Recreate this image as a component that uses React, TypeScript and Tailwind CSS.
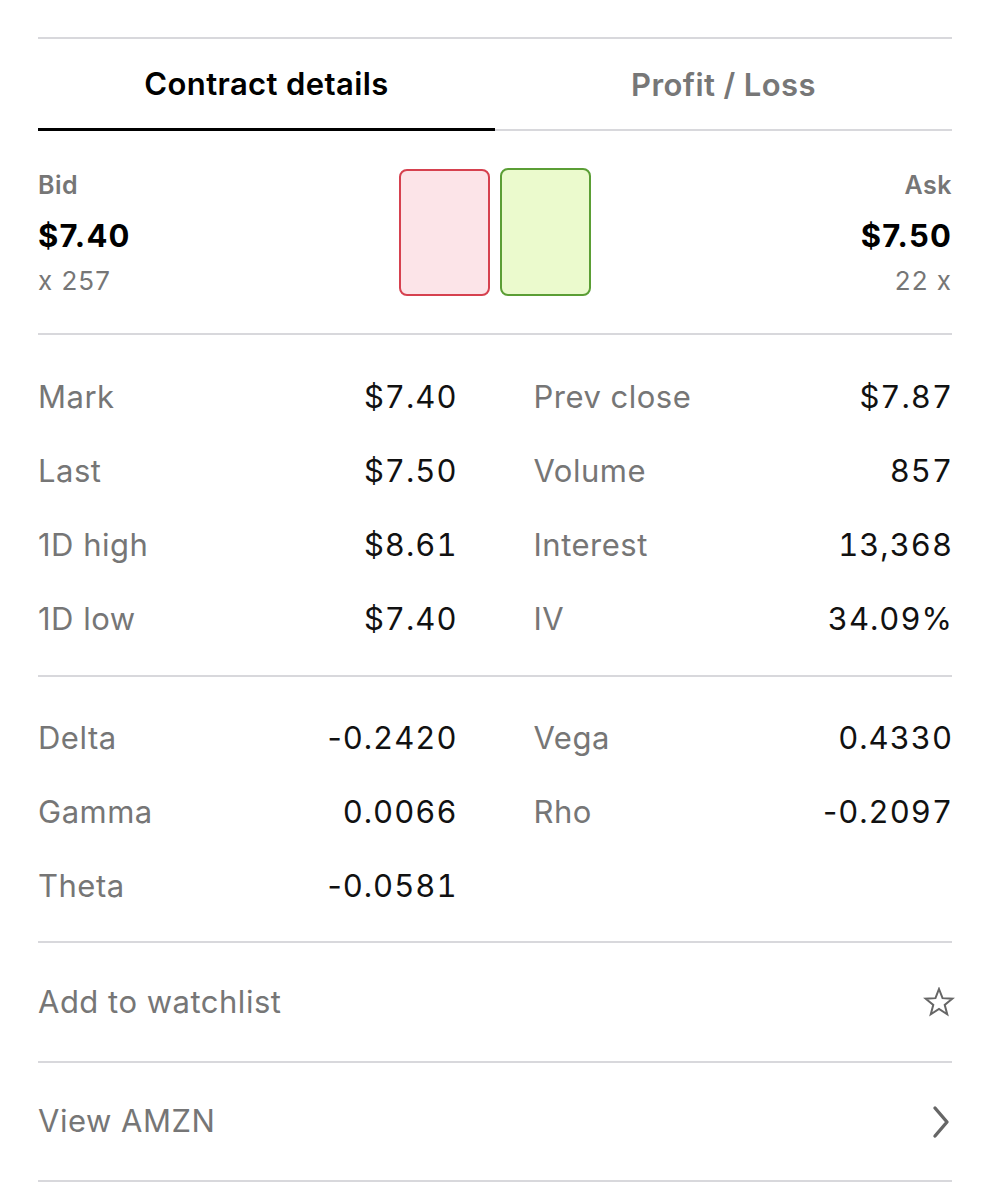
const stats = [
  ["Mark", "$7.40", "Prev close", "$7.87"],
  ["Last", "$7.50", "Volume", "857"],
  ["1D high", "$8.61", "Interest", "13,368"],
  ["1D low", "$7.40", "IV", "34.09%"],
];

const greeks = [
  ["Delta", "-0.2420", "Vega", "0.4330"],
  ["Gamma", "0.0066", "Rho", "-0.2097"],
  ["Theta", "-0.0581", "", ""],
];

const Value = ({ value }: { value: string }) =>
  value.startsWith("-") ? (
    <>
      <span className="normal-nums">-</span>
      {value.slice(1)}
    </>
  ) : (
    <>{value}</>
  );

const Row = ({ label, value }: { label: string; value: string }) => (
  <div className="flex h-[74px] items-center justify-between">
    <span className="text-[#767676]">{label}</span>
    <span className="-mr-[1px] tracking-[1px] text-[#111111] tabular-nums">
      <Value value={value} />
    </span>
  </div>
);

const StatGrid = ({ rows }: { rows: string[][] }) => (
  <div className="grid grid-cols-2 gap-x-[77px]">
    {rows.map(([l1, v1, l2, v2]) => (
      <div key={l1} className="contents">
        <Row label={l1} value={v1} />
        {l2 ? <Row label={l2} value={v2} /> : <div />}
      </div>
    ))}
  </div>
);

const StarIcon = () => (
  <svg width="32" height="30" viewBox="0 0 32 30" className="-mr-[3px]">
    <polygon
      points="16,2 19.53,11.15 29.31,11.67 21.71,17.85 24.23,27.33 16,22 7.77,27.33 10.29,17.85 2.69,11.67 12.47,11.15"
      fill="none"
      stroke="#666666"
      strokeWidth="2"
      strokeLinejoin="miter"
    />
  </svg>
);

const Chevron = () => (
  <svg width="18" height="34" viewBox="0 0 18 34" className="mr-[2px]">
    <polyline
      points="3,3 15,17 3,31"
      fill="none"
      stroke="#666666"
      strokeWidth="3.4"
      strokeLinecap="round"
      strokeLinejoin="round"
    />
  </svg>
);

export default function App() {
  return (
    <div
      className="min-h-[1200px] bg-white px-[38px] pt-[37px] text-[31px] tracking-[0.5px]"
      style={{ fontFamily: "Inter, 'Noto Sans', sans-serif" }}
    >
      <div className="border-t-2 border-[#d8d8dc]">
        <div className="flex h-[92px]">
          <div className="flex flex-1 items-center justify-center border-b-[3px] border-black pt-[2px] text-[31px] font-semibold tracking-[0.4px] text-black">
            Contract details
          </div>
          <div className="flex flex-1 items-center justify-center border-b-2 border-[#d8d8dc] pt-[2px] text-[31px] font-semibold tracking-[0.4px] text-[#777777]">
            Profit / Loss
          </div>
        </div>

        <div className="flex h-[204px] items-start justify-between border-b-2 border-[#d8d8dc] pt-[38px]">
          <div className="flex w-[200px] flex-col">
            <span className="text-[25px] leading-[32px] font-semibold text-[#767676]">Bid</span>
            <span className="mt-[15px] text-[31px] leading-[40px] font-bold tracking-[1.2px] text-black">$7.40</span>
            <span className="mt-[9px] text-[26px] leading-[32px] tracking-[1px] text-[#767676]">x 257</span>
          </div>
          <div className="flex gap-[10px]">
            <div className="h-[127px] w-[91px] rounded-[8px] border-2 border-[#d6414f] bg-[#fce4e8]" />
            <div className="-mt-[1px] h-[128px] w-[91px] rounded-[8px] border-2 border-[#5b9e35] bg-[#ebfacd]" />
          </div>
          <div className="flex w-[200px] flex-col items-end">
            <span className="text-[25px] leading-[32px] font-semibold text-[#767676]">Ask</span>
            <span className="mt-[15px] text-[31px] leading-[40px] font-bold tracking-[1.2px] text-black">$7.50</span>
            <span className="mt-[9px] text-[26px] leading-[32px] tracking-[1px] text-[#767676]">22 x</span>
          </div>
        </div>

        <div className="border-b-2 border-[#d8d8dc] pt-[25px] pb-[19px]">
          <StatGrid rows={stats} />
        </div>

        <div className="border-b-2 border-[#d8d8dc] pt-[24px] pb-[18px]">
          <StatGrid rows={greeks} />
        </div>

        <div className="flex h-[120px] items-center justify-between border-b-2 border-[#d8d8dc] text-[#767676]">
          <span>Add to watchlist</span>
          <StarIcon />
        </div>

        <div className="flex h-[119px] items-center justify-between border-b-2 border-[#d8d8dc] text-[#767676]">
          <span>View AMZN</span>
          <Chevron />
        </div>
      </div>
    </div>
  );
}
